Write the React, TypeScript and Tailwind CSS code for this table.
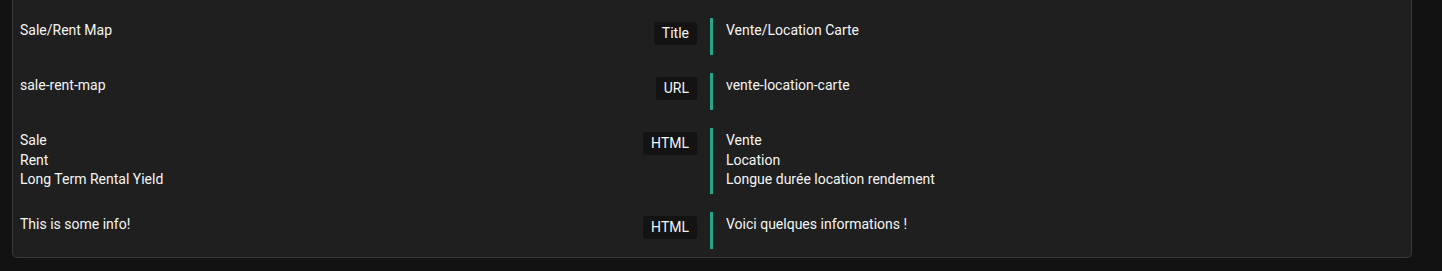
const rows = [
  { source: ["Sale/Rent Map"], type: "Title", target: ["Vente/Location Carte"] },
  { source: ["sale-rent-map"], type: "URL", target: ["vente-location-carte"] },
  {
    source: ["Sale", "Rent", "Long Term Rental Yield"],
    type: "HTML",
    target: ["Vente", "Location", "Longue durée location rendement"],
  },
  { source: ["This is some info!"], type: "HTML", target: ["Voici quelques informations !"] },
];

export default function App() {
  return (
    <div className="min-h-screen bg-[#121212] font-['Roboto',sans-serif] text-[14px] leading-[19.5px] text-[#f5f5f5]">
      <div className="ml-3 w-[1400px] rounded-b-[5px] border-x border-b border-[#383838] bg-[#1f1f1f] pt-[18px] pb-2">
        <div className="flex flex-col gap-[18px]">
          {rows.map((row, i) => (
            <div key={i} className="grid grid-cols-[697px_1fr]">
              <div className="flex items-start justify-between pl-[7px] pr-[13px] pt-[3px]">
                <div>
                  {row.source.map((line, j) => (
                    <div key={j}>{line}</div>
                  ))}
                </div>
                <span className="mt-px rounded-[3px] bg-[#131313] px-2 text-[14px] leading-[23px] text-[#f5f5f5]">
                  {row.type}
                </span>
              </div>
              <div className="min-h-[37px] border-l-[3px] border-[#27a68a] pt-[3px] pb-[4.5px] pl-[13px]">
                {row.target.map((line, j) => (
                  <div key={j}>{line}</div>
                ))}
              </div>
            </div>
          ))}
        </div>
      </div>
    </div>
  );
}
